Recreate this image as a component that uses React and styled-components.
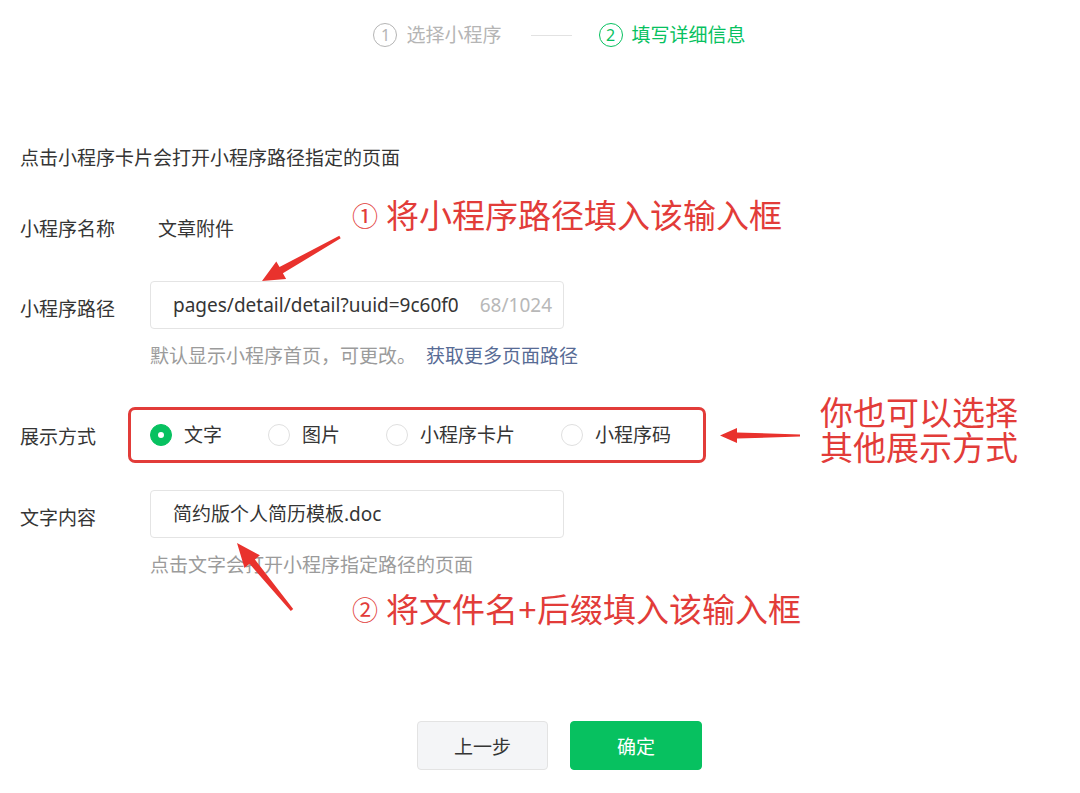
import React from 'react';
import styled, { createGlobalStyle } from 'styled-components';

const GREEN = '#07c160';
const RED = '#e23c39';

const Global = createGlobalStyle`
  body {
    margin: 0;
    background: #fff;
    font-family: "Noto Sans", "Noto Sans CJK SC", sans-serif;
    color: #353535;
  }
`;

export default function App() {
  return (
    <>
      <Global />
      <Page>
        <Header>
          <Step $active={false}><Circle>1</Circle>选择小程序</Step>
          <StepLine />
          <Step $active><Circle>2</Circle>填写详细信息</Step>
        </Header>

        <Form>
          <Intro>点击小程序卡片会打开小程序路径指定的页面</Intro>

          <Row $top={45}>
            <Label>小程序名称</Label>
            <Value>文章附件</Value>
          </Row>

          <Row $top={39}>
            <Label $shift={8}>小程序路径</Label>
            <Input>
              <InputText>pages/detail/detail?uuid=9c60f0a1e2b34c5d6e7f8a9b0c1d2e3f4a5b6c7d8e9</InputText>
              <Counter>68/1024</Counter>
            </Input>
          </Row>
          <Hint>默认显示小程序首页，可更改。<HintLink>获取更多页面路径</HintLink></Hint>

          <Row $top={38}>
            <Label $shift={4}>展示方式</Label>
            <RadioBox>
              <RadioItem><Radio $checked />文字</RadioItem>
              <RadioItem><Radio />图片</RadioItem>
              <RadioItem><Radio />小程序卡片</RadioItem>
              <RadioItem><Radio />小程序码</RadioItem>
            </RadioBox>
          </Row>

          <Row $top={27}>
            <Label $shift={8}>文字内容</Label>
            <Input>
              <InputText>简约版个人简历模板.doc</InputText>
            </Input>
          </Row>
          <Hint>点击文字会打开小程序指定路径的页面</Hint>
        </Form>

        <Buttons>
          <Button>上一步</Button>
          <Button $primary>确定</Button>
        </Buttons>

        <Arrows width="1080" height="793" viewBox="0 0 1080 793">
          <polygon points="340.7,238.3 282.9,273.3 286.1,278.9 262,281 276.3,261.5 279.5,267.1 339.3,235.7" />
          <polygon points="293.2,609 254.9,559.4 259.9,555.3 237,543 244.5,567.9 249.5,563.8 290.8,611" />
          <polygon points="800,436.5 737,438.5 737,443 720,435.5 737,428 737,432.5 800,434.5" />
        </Arrows>

        <Note $x={352} $y={196}><Num>①</Num>将小程序路径填入该输入框</Note>
        <Note $x={352} $y={590}><Num>②</Num>将文件名+后缀填入该输入框</Note>
        <MultiNote $x={820} $y={395}>
          <span>你也可以选择</span>
          <span>其他展示方式</span>
        </MultiNote>
      </Page>
    </>
  );
}

const Page = styled.div`
  position: relative;
  width: 1080px;
  height: 793px;
  overflow: hidden;
  background: #fff;
`;

const Header = styled.div`
  height: 70px;
  padding-left: 39px;
  display: flex;
  align-items: center;
  justify-content: center;
`;

const Step = styled.div`
  display: flex;
  align-items: center;
  font-size: 19px;
  line-height: 26px;
  color: ${p => (p.$active ? GREEN : '#b5b5b5')};
`;

const Circle = styled.span`
  width: 22px;
  height: 22px;
  border: 1.5px solid currentColor;
  border-radius: 50%;
  display: flex;
  align-items: center;
  justify-content: center;
  font-size: 16px;
  line-height: 1;
  margin-right: 9px;
`;

const StepLine = styled.div`
  width: 41px;
  height: 1px;
  background: #e2e2e2;
  margin: 0 27px 0 29px;
`;

const Form = styled.div`
  padding-left: 20px;
  display: flex;
  flex-direction: column;
`;

const Intro = styled.div`
  margin-top: 75px;
  font-size: 19px;
  line-height: 26px;
`;

const Row = styled.div`
  margin-top: ${p => p.$top}px;
  display: flex;
  align-items: center;
`;

const Label = styled.div`
  width: 130px;
  flex-shrink: 0;
  font-size: 19px;
  line-height: 26px;
  padding-top: ${p => p.$shift || 0}px;
`;

const Value = styled.div`
  padding-left: 8px;
  font-size: 19px;
  line-height: 26px;
`;

const Input = styled.div`
  box-sizing: border-box;
  width: 414px;
  height: 48px;
  border: 1px solid #e4e4e4;
  border-radius: 4px;
  padding: 0 11px 0 22px;
  display: flex;
  align-items: center;
  background: #fff;
`;

const InputText = styled.span`
  flex: 1;
  min-width: 0;
  overflow: hidden;
  white-space: nowrap;
  font-size: 19px;
  line-height: 26px;
  color: #353535;
`;

const Counter = styled.span`
  margin-left: 22px;
  font-size: 19px;
  color: #b8b8b8;
  white-space: nowrap;
`;

const Hint = styled.div`
  margin: 14px 0 0 130px;
  font-size: 19px;
  line-height: 26px;
  color: #9b9b9b;
`;

const HintLink = styled.span`
  margin-left: 10px;
  color: #576b95;
`;

const RadioBox = styled.div`
  box-sizing: border-box;
  margin-left: -22px;
  width: 578px;
  height: 56px;
  border: 3px solid ${RED};
  border-radius: 7px;
  padding-left: 19px;
  display: flex;
  align-items: center;
`;

const RadioItem = styled.label`
  flex-shrink: 0;
  display: flex;
  align-items: center;
  gap: 12px;
  margin-right: 46px;
  font-size: 19px;
  line-height: 26px;
  white-space: nowrap;

  &:last-child {
    margin-right: 0;
  }
`;

const Radio = styled.span`
  box-sizing: border-box;
  flex-shrink: 0;
  width: 22px;
  height: 22px;
  border-radius: 50%;
  border: 1px solid ${p => (p.$checked ? GREEN : '#e0e0e0')};
  background: ${p => (p.$checked ? GREEN : '#fff')};
  display: flex;
  align-items: center;
  justify-content: center;

  &::after {
    content: '';
    width: 6px;
    height: 6px;
    border-radius: 50%;
    background: #fff;
    display: ${p => (p.$checked ? 'block' : 'none')};
  }
`;

const Buttons = styled.div`
  margin-top: 143px;
  padding-left: 39px;
  display: flex;
  justify-content: center;
  gap: 22px;
`;

const Button = styled.button`
  box-sizing: border-box;
  width: ${p => (p.$primary ? 132 : 131)}px;
  height: 49px;
  border-radius: 4px;
  border: 1px solid ${p => (p.$primary ? GREEN : '#e3e3e3')};
  background: ${p => (p.$primary ? GREEN : '#f4f5f7')};
  color: ${p => (p.$primary ? '#fff' : '#353535')};
  font-family: "Noto Sans", "Noto Sans CJK SC", sans-serif;
  font-size: 19px;
  cursor: pointer;
`;

const Arrows = styled.svg`
  position: absolute;
  left: 0;
  top: 0;
  pointer-events: none;
  fill: #e9322d;
`;

const Note = styled.div`
  position: absolute;
  left: ${p => p.$x}px;
  top: ${p => p.$y}px;
  font-size: 33px;
  line-height: 40px;
  color: ${RED};
  white-space: nowrap;
  display: flex;
  align-items: center;
`;

const MultiNote = styled(Note)`
  flex-direction: column;
  align-items: flex-start;
  line-height: 35px;
`;

const Num = styled.span`
  font-size: 26px;
  margin-right: 8px;
`;
